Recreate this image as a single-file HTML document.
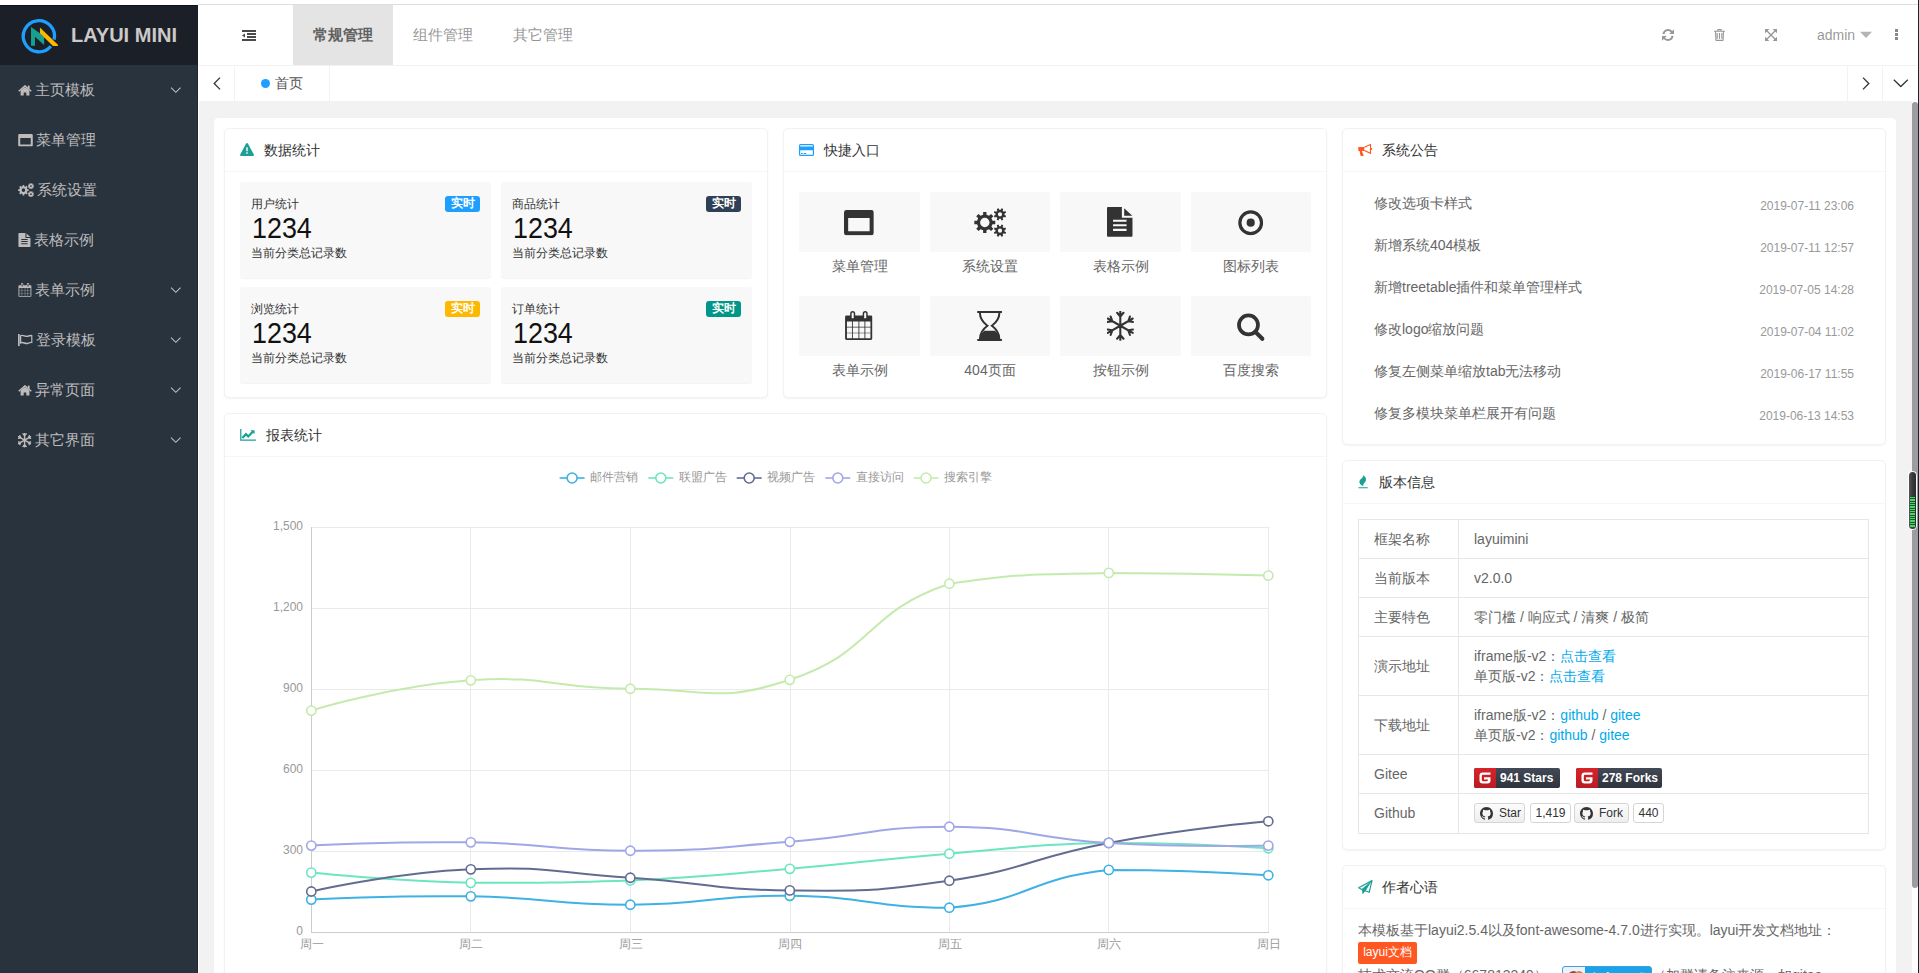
<!DOCTYPE html>
<html><head><meta charset="utf-8">
<style>
*{box-sizing:border-box;margin:0;padding:0}
html,body{width:1919px;height:973px;overflow:hidden;background:#fff;font-family:"Liberation Sans",sans-serif;position:relative}
.a{position:absolute}
svg.i{position:absolute;fill:currentColor;overflow:visible}
#topline{position:absolute;left:198px;top:4px;width:1720px;height:1px;background:#dcdee3}
#rline{position:absolute;left:1918px;top:0;width:1px;height:973px;background:#102a33}
#side{position:absolute;left:0;top:5px;width:198px;height:968px;background:#28333e;color:rgb(191,187,187)}
#logo{position:absolute;left:0;top:0;width:198px;height:60px;background:#1b2028;border-top:1px solid #0e141b}
#logo .t{position:absolute;left:71px;top:17px;font-size:20px;font-weight:bold;color:rgb(205,201,201);line-height:26px;white-space:nowrap}
.mi{position:absolute;left:0;width:198px;height:50px}
.mi .tx{position:absolute;left:35px;top:14px;font-size:15px;line-height:22px;white-space:nowrap}
#header{position:absolute;left:198px;top:5px;width:1720px;height:60px;background:#fff}
#hline{position:absolute;left:198px;top:65px;width:1719px;height:1px;background:#f2f2f2}
.htab{position:absolute;top:5px;height:60px;width:100px;font-size:15px;line-height:60px;text-align:center;color:rgba(107,107,107,.72);font-weight:500;white-space:nowrap}
.htab.on{background:#e4e4e4;color:#606060;font-weight:700}
#tabbar{position:absolute;left:198px;top:66px;width:1719px;height:35px;background:#fff}
.vb{position:absolute;top:66px;width:1px;height:35px;background:#f2f2f2}
#content{position:absolute;left:198px;top:101px;width:1714px;height:872px;background:#f2f2f2}
#panel{position:absolute;left:213px;top:117px;width:1684px;height:900px;background:#fff;border:1px solid #f2f2f2;border-radius:5px}
.card{position:absolute;background:#fff;border:1px solid #f2f2f2;border-radius:5px;box-shadow:0 1px 2px 0 rgba(0,0,0,.05)}
.hd{position:absolute;left:0;top:0;right:0;height:43px;border-bottom:1px solid #f6f6f6;font-size:14px;color:#333;white-space:nowrap}
.hd span{position:absolute;top:11px;line-height:20px}
.sp{position:absolute;background:#f8f8f8;border-radius:3px;box-shadow:0 1px 1px rgba(0,0,0,.05)}
.sp h5{position:absolute;left:11px;top:14px;font-size:12px;line-height:16px;font-weight:normal;color:#333;white-space:nowrap}
.sp h1{position:absolute;left:12px;top:29.5px;font-size:28px;line-height:32px;font-weight:normal;color:#111;transform:scale(0.96,1.05);transform-origin:0 0}
.sp small{position:absolute;left:11px;top:63px;font-size:12px;line-height:16px;color:#333;white-space:nowrap}
.lbl{position:absolute;left:205px;top:14px;width:35px;height:16px;border-radius:3px;color:#fff;font-size:12px;font-weight:bold;line-height:15px;text-align:center}
.qb{position:absolute;width:121px;height:60px;background:#f8f8f8;border-radius:2px;color:#333}
.qc{position:absolute;width:121px;font-size:14px;line-height:20px;color:#666;text-align:center;white-space:nowrap}
.nt{position:absolute;left:1374px;font-size:14px;line-height:20px;color:#666;white-space:nowrap}
.nd{position:absolute;left:1701px;width:153px;text-align:right;font-size:12px;line-height:16px;color:#999;white-space:nowrap}
.tb td{position:absolute}
.vt{position:absolute;font-size:14px;line-height:20px;color:#666;white-space:nowrap}
.lk{color:#01aaed}

</style></head><body>
<svg width="0" height="0" style="position:absolute"><symbol id="i-win" viewBox="0 0 30 25.5"><path fill-rule="evenodd" d="M2.5,0H27.5A2.5,2.5 0 0 1 30,2.5V23A2.5,2.5 0 0 1 27.5,25.5H2.5A2.5,2.5 0 0 1 0,23V2.5A2.5,2.5 0 0 1 2.5,0ZM4.2,8V21.4H25.8V8Z"/></symbol><symbol id="i-gears" viewBox="0 0 32 29"><path fill-rule="evenodd" d="M18.32,12.81 L21.07,12.84 L21.07,16.16 L18.32,16.19 L17.25,18.76 L19.18,20.73 L16.83,23.08 L14.86,21.15 L12.29,22.22 L12.26,24.97 L8.94,24.97 L8.91,22.22 L6.34,21.15 L4.37,23.08 L2.02,20.73 L3.95,18.76 L2.88,16.19 L0.13,16.16 L0.13,12.84 L2.88,12.81 L3.95,10.24 L2.02,8.27 L4.37,5.92 L6.34,7.85 L8.91,6.78 L8.94,4.03 L12.26,4.03 L12.29,6.78 L14.86,7.85 L16.83,5.92 L19.18,8.27 L17.25,10.24 Z M5.90,14.50 a4.70,4.70 0 1,0 9.40,0 a4.70,4.70 0 1,0 -9.40,0 Z"/><path fill-rule="evenodd" d="M30.33,7.11 L31.93,7.77 L31.17,9.59 L29.57,8.93 L28.43,10.07 L29.09,11.67 L27.27,12.43 L26.61,10.83 L24.99,10.83 L24.33,12.43 L22.51,11.67 L23.17,10.07 L22.03,8.93 L20.43,9.59 L19.67,7.77 L21.27,7.11 L21.27,5.49 L19.67,4.83 L20.43,3.01 L22.03,3.67 L23.17,2.53 L22.51,0.93 L24.33,0.17 L24.99,1.77 L26.61,1.77 L27.27,0.17 L29.09,0.93 L28.43,2.53 L29.57,3.67 L31.17,3.01 L31.93,4.83 L30.33,5.49 Z M23.70,6.30 a2.10,2.10 0 1,0 4.20,0 a2.10,2.10 0 1,0 -4.20,0 Z"/><path fill-rule="evenodd" d="M30.33,23.51 L31.93,24.17 L31.17,25.99 L29.57,25.33 L28.43,26.47 L29.09,28.07 L27.27,28.83 L26.61,27.23 L24.99,27.23 L24.33,28.83 L22.51,28.07 L23.17,26.47 L22.03,25.33 L20.43,25.99 L19.67,24.17 L21.27,23.51 L21.27,21.89 L19.67,21.23 L20.43,19.41 L22.03,20.07 L23.17,18.93 L22.51,17.33 L24.33,16.57 L24.99,18.17 L26.61,18.17 L27.27,16.57 L29.09,17.33 L28.43,18.93 L29.57,20.07 L31.17,19.41 L31.93,21.23 L30.33,21.89 Z M23.70,22.70 a2.10,2.10 0 1,0 4.20,0 a2.10,2.10 0 1,0 -4.20,0 Z"/></symbol><symbol id="i-file" viewBox="0 0 26 30"><path fill-rule="evenodd" d="M1,0H15V10.8H25.8V29A1,1 0 0 1 24.8,30H1A1,1 0 0 1 0,29V1A1,1 0 0 1 1,0ZM6.1,12.8H19.7V14.9H6.1ZM6.1,17.2H19.7V19.3H6.1ZM6.1,21.9H19.7V24H6.1Z"/><path d="M17.3,1.2L25.5,8.7H17.3Z"/></symbol><symbol id="i-dot" viewBox="0 0 26 26"><circle cx="13" cy="13" r="11.1" fill="none" stroke="currentColor" stroke-width="3.3"/><circle cx="13" cy="13" r="4.2"/></symbol><symbol id="i-cal" viewBox="0 0 28 30"><path fill-rule="nonzero" d="M1.5,4.7H26.2A1.5,1.5 0 0 1 27.7,6.2V28A1.5,1.5 0 0 1 26.2,29.5H1.5A1.5,1.5 0 0 1 0,28V6.2A1.5,1.5 0 0 1 1.5,4.7ZM1.9,10.8V15.9H7.0V10.8ZM1.9,16.7V22.0H7.0V16.7ZM1.9,22.7V27.7H7.0V22.7ZM7.9,10.8V15.9H13.6V10.8ZM7.9,16.7V22.0H13.6V16.7ZM7.9,22.7V27.7H13.6V22.7ZM14.5,10.8V15.9H19.7V10.8ZM14.5,16.7V22.0H19.7V16.7ZM14.5,22.7V27.7H19.7V22.7ZM20.6,10.8V15.9H25.8V10.8ZM20.6,16.7V22.0H25.8V16.7ZM20.6,22.7V27.7H25.8V22.7Z M5.2,8.6V2.6A2.55,2.55 0 0 1 10.3,2.6V8.6Z M6.7,4.7H8.8V2.6A1.05,1.05 0 0 0 6.7,2.6Z M6.7,7.4H8.8V4.7H6.7Z M6.7,7.4H8.8V4.7H6.7Z M17.9,8.6V2.6A2.55,2.55 0 0 1 23,2.6V8.6Z M19.4,4.7H21.5V2.6A1.05,1.05 0 0 0 19.4,2.6Z M19.4,7.4H21.5V4.7H19.4Z M19.4,7.4H21.5V4.7H19.4Z"/></symbol><symbol id="i-hour" viewBox="0 0 25.3 30"><rect x="0" y="0" width="25.3" height="2" rx="0.8"/><rect x="0" y="28" width="25.3" height="2" rx="0.8"/><path fill="none" stroke="currentColor" stroke-width="2" d="M2.9,2C2.9,8 6,11.5 10.4,14.8C6,18.1 2.9,21.5 2.9,28M22.4,2C22.4,8 19.3,11.5 14.9,14.8C19.3,18.1 22.4,21.5 22.4,28"/><path d="M7.3,19.9H18C20.7,22 22.5,24.5 22.5,28.1H2.8C2.8,24.5 4.6,22 7.3,19.9Z"/></symbol><symbol id="i-snow" viewBox="0 0 27 30"><path fill="none" stroke="currentColor" stroke-width="2.1" stroke-linecap="round" d="M13.40,14.90 L13.40,0.30 M13.40,5.60 L10.19,1.77 M13.40,5.60 L16.61,1.77 M13.40,14.90 L26.04,7.60 M21.45,10.25 L23.16,5.55 M21.45,10.25 L26.38,11.12 M13.40,14.90 L26.04,22.20 M21.45,19.55 L26.38,18.68 M21.45,19.55 L23.16,24.25 M13.40,14.90 L13.40,29.50 M13.40,24.20 L16.61,28.03 M13.40,24.20 L10.19,28.03 M13.40,14.90 L0.76,22.20 M5.35,19.55 L3.64,24.25 M5.35,19.55 L0.42,18.68 M13.40,14.90 L0.76,7.60 M5.35,10.25 L0.42,11.12 M5.35,10.25 L3.64,5.55 "/></symbol><symbol id="i-search" viewBox="0 0 28 28"><circle cx="11.6" cy="12" r="9.6" fill="none" stroke="currentColor" stroke-width="3.8"/><path d="M18.6,19L25.6,26" stroke="currentColor" stroke-width="4.2" stroke-linecap="round"/></symbol><symbol id="i-home" viewBox="0 0 14 11"><path fill="none" stroke="currentColor" stroke-width="1.5" d="M0.7,6.3L7,0.9L13.3,6.3"/><path d="M2.6,5.6L7,1.9L11.4,5.6V10.6H8.3V7.4H5.7V10.6H2.6Z"/><rect x="9.8" y="0.6" width="1.8" height="3.2"/></symbol><symbol id="i-flag" viewBox="0 0 15 12.5"><rect x="0" y="0" width="1.7" height="12.5"/><path fill="none" stroke="currentColor" stroke-width="1.4" d="M2.6,1.8C5,0.3 7.5,3.3 10,2.3C12,1.5 13.2,1.4 14.2,1.6V8.6C13,8.5 12,8.8 10,9.6C7.5,10.6 5,7.6 2.6,9.1Z"/></symbol><symbol id="i-down" viewBox="0 0 12 7"><path fill="none" stroke="currentColor" stroke-width="1.3" d="M0.6,0.7L6,6L11.4,0.7"/></symbol><symbol id="i-warn" viewBox="0 0 14 13"><path fill-rule="evenodd" d="M6.1,0.6Q7,-0.6 7.9,0.6L13.8,11.6Q14.2,12.9 12.9,12.9H1.1Q-0.2,12.9 0.2,11.6ZM6.3,4.3H7.7V8.3H6.3ZM6.3,9.3H7.7V10.8H6.3Z"/></symbol><symbol id="i-card" viewBox="0 0 15 12"><path fill-rule="evenodd" d="M1.5,0H13.5A1.5,1.5 0 0 1 15,1.5V10.5A1.5,1.5 0 0 1 13.5,12H1.5A1.5,1.5 0 0 1 0,10.5V1.5A1.5,1.5 0 0 1 1.5,0ZM1.2,1.3V2.5H13.8V1.3ZM1.2,6.3V10.7H13.8V6.3Z"/><path d="M2,9.1H3.8V10H2ZM4.7,9.1H7.3V10H4.7Z"/></symbol><symbol id="i-horn" viewBox="0 0 15 12"><path d="M0.3,3.4Q0.3,2.9 0.8,2.9H6.3V6.9H3.8L5.6,11.2Q5.8,11.9 5,11.9H3.3Q2.6,11.9 2.4,11.2L1.6,6.9H0.8Q0.3,6.9 0.3,6.4Z"/><path fill="none" stroke="currentColor" stroke-width="1.1" d="M6.3,3.3L12.5,0.5V9.3L6.3,6.5"/><circle cx="13.3" cy="4.9" r="1"/></symbol><symbol id="i-fire" viewBox="0 0 12 15"><path d="M5.6,0.1C7.6,1.4 9.1,3 8.7,5.5C8.4,7.5 6.3,8.5 5.8,10C5.6,10.6 5.7,11.2 6,11.8C3.5,11 1.4,9.5 1.5,7.1C1.6,4.9 3.8,3.8 4.9,2.5C5.4,1.8 5.7,1 5.6,0.1Z"/><rect x="0.3" y="13.1" width="10.6" height="1" rx="0.5"/></symbol><symbol id="i-lchart" viewBox="0 0 17 13"><path d="M0,0H1.3V10.9H16.5V12.2H0Z"/><path fill="none" stroke="currentColor" stroke-width="2.3" d="M2.3,9.4L6.1,5.4L8.5,7.8L13.4,2.6"/><path d="M10.9,1.2H15.1V5.4Z"/></symbol><symbol id="i-plane" viewBox="0 0 15 15"><path fill="none" stroke="currentColor" stroke-width="1.2" stroke-linejoin="round" d="M14,0.6L0.7,7.8L4.2,9.7L11.2,12.3Z"/><path d="M14,0.6L3.8,8.9L4.6,14.2L7.7,10.8Z"/></symbol><symbol id="i-prev" viewBox="0 0 8 13"><path fill="none" stroke="currentColor" stroke-width="1.3" d="M7,0.6L1.2,6.5L7,12.4"/></symbol><symbol id="i-next" viewBox="0 0 8 13"><path fill="none" stroke="currentColor" stroke-width="1.3" d="M1,0.6L6.8,6.5L1,12.4"/></symbol><symbol id="i-vdown" viewBox="0 0 16 9"><path fill="none" stroke="currentColor" stroke-width="1.3" d="M0.6,0.8L8,8L15.4,0.8"/></symbol><symbol id="i-outdent" viewBox="0 0 14 11"><rect x="0" y="0" width="14" height="2"/><rect x="5" y="3" width="9" height="2"/><rect x="5" y="6" width="9" height="2"/><rect x="0" y="9" width="14" height="2"/><path d="M0,5.5L3,3.5V7.5Z"/></symbol><symbol id="i-refresh" viewBox="0 0 12 12"><path fill="none" stroke="currentColor" stroke-width="1.9" d="M1.5,5.2A4.6,4.6 0 0 1 10.1,3.4"/><path d="M12,0.3V5.1H7.2Z"/><path fill="none" stroke="currentColor" stroke-width="1.9" d="M10.5,6.8A4.6,4.6 0 0 1 1.9,8.6"/><path d="M0,11.7V6.9H4.8Z"/></symbol><symbol id="i-trash" viewBox="0 0 11 12"><path fill="none" stroke="currentColor" stroke-width="1.1" d="M0,2.3H11M3.7,2.3V1.2Q3.7,0.6 4.3,0.6H6.7Q7.3,0.6 7.3,1.2V2.3M1.5,2.3L1.9,11Q1.9,11.4 2.4,11.4H8.6Q9.1,11.4 9.1,11L9.5,2.3M3.2,4.1V9.7M5.5,4.1V9.7M7.8,4.1V9.7"/></symbol><symbol id="i-expand" viewBox="0 0 12 12"><path d="M0,0H4.3L0,4.3ZM12,0V4.3L7.7,0ZM0,12V7.7L4.3,12ZM12,12H7.7L12,7.7Z"/><path fill="none" stroke="currentColor" stroke-width="1.35" d="M1.5,1.5L10.5,10.5M10.5,1.5L1.5,10.5"/></symbol><symbol id="i-octo" viewBox="0 0 16 16"><path d="M8,0C3.58,0 0,3.58 0,8c0,3.54 2.29,6.53 5.47,7.59.4.07.55-.17.55-.38 0-.19-.01-.82-.01-1.49-2.01.37-2.53-.49-2.69-.94-.09-.23-.48-.94-.82-1.13-.28-.15-.68-.52-.01-.53.63-.01 1.08.58 1.23.82.72 1.21 1.87.87 2.33.66.07-.52.28-.87.51-1.07-1.78-.2-3.64-.89-3.64-3.95 0-.87.31-1.59.82-2.15-.08-.2-.36-1.02.08-2.12 0 0 .67-.21 2.2.82.64-.18 1.32-.27 2-.27.68 0 1.36.09 2 .27 1.53-1.04 2.2-.82 2.2-.82.44 1.1.16 1.92.08 2.12.51.56.82 1.27.82 2.15 0 3.07-1.87 3.75-3.65 3.95.29.25.54.73.54 1.48 0 1.07-.01 1.93-.01 2.2 0 .21.15.46.55.38A8.013,8.013 0 0 0 16,8c0-4.42-3.58-8-8-8z"/></symbol><symbol id="i-gears-s" viewBox="0 0 32 29"><path fill-rule="evenodd" d="M18.71,12.72 L21.27,12.81 L21.27,16.19 L18.71,16.28 L17.59,18.97 L19.34,20.85 L16.95,23.24 L15.07,21.49 L12.38,22.61 L12.29,25.17 L8.91,25.17 L8.82,22.61 L6.13,21.49 L4.25,23.24 L1.86,20.85 L3.61,18.97 L2.49,16.28 L-0.07,16.19 L-0.07,12.81 L2.49,12.72 L3.61,10.03 L1.86,8.15 L4.25,5.76 L6.13,7.51 L8.82,6.39 L8.91,3.83 L12.29,3.83 L12.38,6.39 L15.07,7.51 L16.95,5.76 L19.34,8.15 L17.59,10.03 Z M7.00,14.50 a3.60,3.60 0 1,0 7.20,0 a3.60,3.60 0 1,0 -7.20,0 Z"/><path fill-rule="evenodd" d="M30.72,7.18 L32.02,7.79 L31.26,9.64 L29.90,9.16 L28.66,10.40 L29.14,11.76 L27.29,12.52 L26.68,11.22 L24.92,11.22 L24.31,12.52 L22.46,11.76 L22.94,10.40 L21.70,9.16 L20.34,9.64 L19.58,7.79 L20.88,7.18 L20.88,5.42 L19.58,4.81 L20.34,2.96 L21.70,3.44 L22.94,2.20 L22.46,0.84 L24.31,0.08 L24.92,1.38 L26.68,1.38 L27.29,0.08 L29.14,0.84 L28.66,2.20 L29.90,3.44 L31.26,2.96 L32.02,4.81 L30.72,5.42 Z M24.10,6.30 a1.70,1.70 0 1,0 3.40,0 a1.70,1.70 0 1,0 -3.40,0 Z"/><path fill-rule="evenodd" d="M30.72,23.58 L32.02,24.19 L31.26,26.04 L29.90,25.56 L28.66,26.80 L29.14,28.16 L27.29,28.92 L26.68,27.62 L24.92,27.62 L24.31,28.92 L22.46,28.16 L22.94,26.80 L21.70,25.56 L20.34,26.04 L19.58,24.19 L20.88,23.58 L20.88,21.82 L19.58,21.21 L20.34,19.36 L21.70,19.84 L22.94,18.60 L22.46,17.24 L24.31,16.48 L24.92,17.78 L26.68,17.78 L27.29,16.48 L29.14,17.24 L28.66,18.60 L29.90,19.84 L31.26,19.36 L32.02,21.21 L30.72,21.82 Z M24.10,22.70 a1.70,1.70 0 1,0 3.40,0 a1.70,1.70 0 1,0 -3.40,0 Z"/></symbol><symbol id="i-snow-s" viewBox="0 0 27 30"><path fill="none" stroke="currentColor" stroke-width="2.9" stroke-linecap="round" d="M13.40,14.90 L13.40,0.30 M13.40,5.60 L10.19,1.77 M13.40,5.60 L16.61,1.77 M13.40,14.90 L26.04,7.60 M21.45,10.25 L23.16,5.55 M21.45,10.25 L26.38,11.12 M13.40,14.90 L26.04,22.20 M21.45,19.55 L26.38,18.68 M21.45,19.55 L23.16,24.25 M13.40,14.90 L13.40,29.50 M13.40,24.20 L16.61,28.03 M13.40,24.20 L10.19,28.03 M13.40,14.90 L0.76,22.20 M5.35,19.55 L3.64,24.25 M5.35,19.55 L0.42,18.68 M13.40,14.90 L0.76,7.60 M5.35,10.25 L0.42,11.12 M5.35,10.25 L3.64,5.55 "/></symbol></svg>
<div id="topline"></div>
<div id="side"><div id="logo"></div></div>
<svg class="a" style="left:0;top:0;width:198px;height:65px"><path d="M50.85,46.23 A15.6,15.6 0 1 1 54.09,39.71" fill="none" stroke="#1e9fff" stroke-width="3.3"/><polygon fill="#16a08f" points="31.03,27.05 39.91,33.21 44.11,37.26 44.11,45.05 34.98,36.67 34.98,45.79 31.03,45.79"/><polygon fill="#ffb800" points="39.91,27.54 58.17,44.96 57.67,45.94 52.99,45.94 39.91,33.31"/></svg>
<div class="a" style="left:71px;top:22px;font-size:20px;line-height:26px;font-weight:bold;color:rgb(205,201,201);white-space:nowrap">LAYUI MINI</div>
<svg class="i" style="left:17.50px;top:84.50px;width:14.00px;height:11.00px;color:rgb(191,187,187);" preserveAspectRatio="none"><use href="#i-home"/></svg>
<div class="a " style="left:35.00px;top:79.00px;font-size:15px;line-height:22px;color:rgb(191,187,187);white-space:nowrap">主页模板</div>
<svg class="i" style="left:169.90px;top:87.00px;width:11.60px;height:6.20px;color:rgb(191,187,187);" preserveAspectRatio="none"><use href="#i-down"/></svg>
<svg class="i" style="left:17.60px;top:133.90px;width:15.00px;height:12.40px;color:rgb(191,187,187);" preserveAspectRatio="none"><use href="#i-win"/></svg>
<div class="a " style="left:36.00px;top:129.00px;font-size:15px;line-height:22px;color:rgb(191,187,187);white-space:nowrap">菜单管理</div>
<svg class="i" style="left:17.60px;top:182.80px;width:16.20px;height:14.30px;color:rgb(191,187,187);" preserveAspectRatio="none"><use href="#i-gears-s"/></svg>
<div class="a " style="left:37.00px;top:179.00px;font-size:15px;line-height:22px;color:rgb(191,187,187);white-space:nowrap">系统设置</div>
<svg class="i" style="left:17.60px;top:232.90px;width:13.00px;height:14.00px;color:rgb(191,187,187);" preserveAspectRatio="none"><use href="#i-file"/></svg>
<div class="a " style="left:34.00px;top:229.00px;font-size:15px;line-height:22px;color:rgb(191,187,187);white-space:nowrap">表格示例</div>
<svg class="i" style="left:17.60px;top:282.90px;width:14.00px;height:14.00px;color:rgb(191,187,187);" preserveAspectRatio="none"><use href="#i-cal"/></svg>
<div class="a " style="left:35.00px;top:279.00px;font-size:15px;line-height:22px;color:rgb(191,187,187);white-space:nowrap">表单示例</div>
<svg class="i" style="left:169.90px;top:287.00px;width:11.60px;height:6.20px;color:rgb(191,187,187);" preserveAspectRatio="none"><use href="#i-down"/></svg>
<svg class="i" style="left:18.30px;top:333.60px;width:14.70px;height:12.20px;color:rgb(191,187,187);" preserveAspectRatio="none"><use href="#i-flag"/></svg>
<div class="a " style="left:36.00px;top:329.00px;font-size:15px;line-height:22px;color:rgb(191,187,187);white-space:nowrap">登录模板</div>
<svg class="i" style="left:169.90px;top:337.00px;width:11.60px;height:6.20px;color:rgb(191,187,187);" preserveAspectRatio="none"><use href="#i-down"/></svg>
<svg class="i" style="left:17.50px;top:384.50px;width:14.00px;height:11.00px;color:rgb(191,187,187);" preserveAspectRatio="none"><use href="#i-home"/></svg>
<div class="a " style="left:35.00px;top:379.00px;font-size:15px;line-height:22px;color:rgb(191,187,187);white-space:nowrap">异常页面</div>
<svg class="i" style="left:169.90px;top:387.00px;width:11.60px;height:6.20px;color:rgb(191,187,187);" preserveAspectRatio="none"><use href="#i-down"/></svg>
<svg class="i" style="left:18.00px;top:432.90px;width:13.30px;height:14.40px;color:rgb(191,187,187);" preserveAspectRatio="none"><use href="#i-snow-s"/></svg>
<div class="a " style="left:35.00px;top:429.00px;font-size:15px;line-height:22px;color:rgb(191,187,187);white-space:nowrap">其它界面</div>
<svg class="i" style="left:169.90px;top:437.00px;width:11.60px;height:6.20px;color:rgb(191,187,187);" preserveAspectRatio="none"><use href="#i-down"/></svg>
<div id="hline"></div>
<svg class="i" style="left:242.00px;top:30.00px;width:14.00px;height:11.00px;color:#4a4a4a;" preserveAspectRatio="none"><use href="#i-outdent"/></svg>
<div class="htab on" style="left:293px">常规管理</div>
<div class="htab" style="left:393px">组件管理</div>
<div class="htab" style="left:493px">其它管理</div>
<svg class="i" style="left:1662.00px;top:29.00px;width:12.00px;height:12.00px;color:#979797;" preserveAspectRatio="none"><use href="#i-refresh"/></svg>
<svg class="i" style="left:1714.00px;top:29.00px;width:11.00px;height:12.00px;color:#979797;" preserveAspectRatio="none"><use href="#i-trash"/></svg>
<svg class="i" style="left:1765.00px;top:29.00px;width:12.00px;height:12.00px;color:#979797;" preserveAspectRatio="none"><use href="#i-expand"/></svg>
<div class="a " style="left:1817.00px;top:25.00px;font-size:14px;line-height:20px;color:rgba(107,107,107,.7)">admin</div>
<svg class="a" style="left:1859px;top:31px;width:14px;height:8px"><path d="M1,0.8H13L7,7Z" fill="#b5b5b5"/></svg>
<div class="a" style="left:1895px;top:29px;width:3px;height:3px;background:#8f8486"></div>
<div class="a" style="left:1895px;top:33px;width:3px;height:3px;background:#8f8486"></div>
<div class="a" style="left:1895px;top:37px;width:3px;height:3px;background:#8f8486"></div>
<div class="vb" style="left:234px"></div>
<div class="vb" style="left:329px"></div>
<div class="vb" style="left:1847px"></div>
<div class="vb" style="left:1882px"></div>
<svg class="i" style="left:212.50px;top:76.50px;width:8.00px;height:13.00px;color:#333;" preserveAspectRatio="none"><use href="#i-prev"/></svg>
<div class="a" style="left:261px;top:79px;width:9px;height:9px;border-radius:50%;background:#1e9fff"></div>
<div class="a " style="left:275.00px;top:73.00px;font-size:14px;line-height:20px;color:#555;white-space:nowrap">首页</div>
<svg class="i" style="left:1861.50px;top:76.50px;width:8.00px;height:13.00px;color:#333;" preserveAspectRatio="none"><use href="#i-next"/></svg>
<svg class="i" style="left:1892.60px;top:78.50px;width:15.60px;height:8.50px;color:#333;" preserveAspectRatio="none"><use href="#i-vdown"/></svg>
<div id="content"></div>
<div class="a" style="left:197px;top:65px;width:1px;height:908px;background:#1e2733"></div>
<div class="a" style="left:198px;top:101px;width:1px;height:872px;background:#fff"></div>
<div id="panel"></div>
<div class="a" style="left:1912px;top:102px;width:6px;height:786px;border-radius:3px;background:#9c9da1"></div>
<div class="a" style="left:1907.5px;top:471px;width:9px;height:59px;border-radius:4.5px;background:#fff;opacity:.9"></div>
<div class="a" style="left:1908.5px;top:472px;width:7px;height:57px;border-radius:3.5px;background:linear-gradient(90deg,#555557,#3a3a3c 50%,#2c2c2e);overflow:hidden"><div class="a" style="left:1px;top:25px;width:5px;height:31px;background:repeating-linear-gradient(180deg,#3ddc62 0,#3ddc62 1.3px,#2f4a35 1.3px,#2f4a35 2.35px)"></div></div>
<div id="rline"></div>
<div class="card" style="left:224px;top:128px;width:544px;height:270px"><div class="hd"></div></div>
<div class="card" style="left:783px;top:128px;width:544px;height:270px"><div class="hd"></div></div>
<div class="card" style="left:224px;top:413px;width:1103px;height:600px"><div class="hd"></div></div>
<div class="card" style="left:1342px;top:128px;width:544px;height:317px"><div class="hd"></div></div>
<div class="card" style="left:1342px;top:460px;width:544px;height:390px"><div class="hd"></div></div>
<div class="card" style="left:1342px;top:865px;width:544px;height:200px"><div class="hd"></div></div>
<svg class="i" style="left:240.00px;top:143.00px;width:14.00px;height:13.00px;color:#1aa094;" preserveAspectRatio="none"><use href="#i-warn"/></svg>
<div class="a " style="left:264.00px;top:140.00px;font-size:14px;line-height:20px;color:#333;white-space:nowrap">数据统计</div>
<svg class="i" style="left:799.00px;top:144.00px;width:15.00px;height:12.00px;color:#1e9fff;" preserveAspectRatio="none"><use href="#i-card"/></svg>
<div class="a " style="left:824.00px;top:140.00px;font-size:14px;line-height:20px;color:#333;white-space:nowrap">快捷入口</div>
<svg class="i" style="left:239.70px;top:428.70px;width:16.50px;height:12.40px;color:#1aa094;" preserveAspectRatio="none"><use href="#i-lchart"/></svg>
<div class="a " style="left:266.00px;top:425.00px;font-size:14px;line-height:20px;color:#333;white-space:nowrap">报表统计</div>
<svg class="i" style="left:1357.80px;top:143.90px;width:15.00px;height:12.00px;color:#ff5722;" preserveAspectRatio="none"><use href="#i-horn"/></svg>
<div class="a " style="left:1382.00px;top:140.00px;font-size:14px;line-height:20px;color:#333;white-space:nowrap">系统公告</div>
<svg class="i" style="left:1358.00px;top:475.00px;width:11.00px;height:14.30px;color:#1aa094;" preserveAspectRatio="none"><use href="#i-fire"/></svg>
<div class="a " style="left:1379.00px;top:472.00px;font-size:14px;line-height:20px;color:#333;white-space:nowrap">版本信息</div>
<svg class="i" style="left:1357.90px;top:879.80px;width:15.00px;height:15.00px;color:#1aa094;" preserveAspectRatio="none"><use href="#i-plane"/></svg>
<div class="a " style="left:1382.00px;top:877.00px;font-size:14px;line-height:20px;color:#333;white-space:nowrap">作者心语</div>
<div class="sp" style="left:240px;top:182px;width:251px;height:96px"><h5>用户统计</h5><h1>1234</h1><small>当前分类总记录数</small><div class="lbl" style="background:#1e9fff">实时</div></div>
<div class="sp" style="left:501px;top:182px;width:251px;height:96px"><h5>商品统计</h5><h1>1234</h1><small>当前分类总记录数</small><div class="lbl" style="background:#2f4056">实时</div></div>
<div class="sp" style="left:240px;top:287px;width:251px;height:96px"><h5>浏览统计</h5><h1>1234</h1><small>当前分类总记录数</small><div class="lbl" style="background:#ffb800">实时</div></div>
<div class="sp" style="left:501px;top:287px;width:251px;height:96px"><h5>订单统计</h5><h1>1234</h1><small>当前分类总记录数</small><div class="lbl" style="background:#009688">实时</div></div>
<div class="qb" style="left:799.0px;top:192px;width:120.5px"></div>
<svg class="i" style="left:844.40px;top:209.50px;width:29.80px;height:25.40px;color:#333;" preserveAspectRatio="none"><use href="#i-win"/></svg>
<div class="qc" style="left:799.0px;top:256px">菜单管理</div>
<div class="qb" style="left:929.5px;top:192px;width:120.5px"></div>
<svg class="i" style="left:973.80px;top:207.70px;width:32.40px;height:29.00px;color:#333;" preserveAspectRatio="none"><use href="#i-gears"/></svg>
<div class="qc" style="left:929.5px;top:256px">系统设置</div>
<div class="qb" style="left:1060.0px;top:192px;width:120.5px"></div>
<svg class="i" style="left:1107.20px;top:207.00px;width:25.80px;height:29.90px;color:#333;" preserveAspectRatio="none"><use href="#i-file"/></svg>
<div class="qc" style="left:1060.0px;top:256px">表格示例</div>
<div class="qb" style="left:1190.5px;top:192px;width:120.5px"></div>
<svg class="i" style="left:1238.00px;top:209.50px;width:25.40px;height:25.40px;color:#333;" preserveAspectRatio="none"><use href="#i-dot"/></svg>
<div class="qc" style="left:1190.5px;top:256px">图标列表</div>
<div class="qb" style="left:799.0px;top:296px;width:120.5px"></div>
<svg class="i" style="left:845.30px;top:311.30px;width:27.70px;height:29.50px;color:#333;" preserveAspectRatio="none"><use href="#i-cal"/></svg>
<div class="qc" style="left:799.0px;top:360px">表单示例</div>
<div class="qb" style="left:929.5px;top:296px;width:120.5px"></div>
<svg class="i" style="left:977.10px;top:311.10px;width:25.30px;height:29.90px;color:#333;" preserveAspectRatio="none"><use href="#i-hour"/></svg>
<div class="qc" style="left:929.5px;top:360px">404页面</div>
<div class="qb" style="left:1060.0px;top:296px;width:120.5px"></div>
<svg class="i" style="left:1106.70px;top:311.30px;width:26.80px;height:29.70px;color:#333;" preserveAspectRatio="none"><use href="#i-snow"/></svg>
<div class="qc" style="left:1060.0px;top:360px">按钮示例</div>
<div class="qb" style="left:1190.5px;top:296px;width:120.5px"></div>
<svg class="i" style="left:1237.10px;top:313.10px;width:27.70px;height:27.90px;color:#333;" preserveAspectRatio="none"><use href="#i-search"/></svg>
<div class="qc" style="left:1190.5px;top:360px">百度搜索</div>
<div class="nt" style="top:193px">修改选项卡样式</div>
<div class="nd" style="top:197.6px">2019-07-11 23:06</div>
<div class="nt" style="top:235px">新增系统404模板</div>
<div class="nd" style="top:239.6px">2019-07-11 12:57</div>
<div class="nt" style="top:277px">新增treetable插件和菜单管理样式</div>
<div class="nd" style="top:281.6px">2019-07-05 14:28</div>
<div class="nt" style="top:319px">修改logo缩放问题</div>
<div class="nd" style="top:323.6px">2019-07-04 11:02</div>
<div class="nt" style="top:361px">修复左侧菜单缩放tab无法移动</div>
<div class="nd" style="top:365.6px">2019-06-17 11:55</div>
<div class="nt" style="top:403px">修复多模块菜单栏展开有问题</div>
<div class="nd" style="top:407.6px">2019-06-13 14:53</div>
<div class="a" style="left:1358px;top:519px;width:511px;height:315px;border:1px solid #e6e6e6"></div>
<div class="a" style="left:1358px;top:558px;width:511px;height:1px;background:#e6e6e6"></div>
<div class="a" style="left:1358px;top:597px;width:511px;height:1px;background:#e6e6e6"></div>
<div class="a" style="left:1358px;top:636px;width:511px;height:1px;background:#e6e6e6"></div>
<div class="a" style="left:1358px;top:695px;width:511px;height:1px;background:#e6e6e6"></div>
<div class="a" style="left:1358px;top:754px;width:511px;height:1px;background:#e6e6e6"></div>
<div class="a" style="left:1358px;top:793px;width:511px;height:1px;background:#e6e6e6"></div>
<div class="a" style="left:1458px;top:519px;width:1px;height:315px;background:#e6e6e6"></div>
<div class="a " style="left:1374.00px;top:528.50px;font-size:14px;line-height:20px;color:#666;white-space:nowrap">框架名称</div>
<div class="a " style="left:1374.00px;top:567.50px;font-size:14px;line-height:20px;color:#666;white-space:nowrap">当前版本</div>
<div class="a " style="left:1374.00px;top:606.50px;font-size:14px;line-height:20px;color:#666;white-space:nowrap">主要特色</div>
<div class="a " style="left:1374.00px;top:655.50px;font-size:14px;line-height:20px;color:#666;white-space:nowrap">演示地址</div>
<div class="a " style="left:1374.00px;top:714.50px;font-size:14px;line-height:20px;color:#666;white-space:nowrap">下载地址</div>
<div class="a " style="left:1374.00px;top:763.50px;font-size:14px;line-height:20px;color:#666;white-space:nowrap">Gitee</div>
<div class="a " style="left:1374.00px;top:803.00px;font-size:14px;line-height:20px;color:#666;white-space:nowrap">Github</div>
<div class="a " style="left:1474.00px;top:528.50px;font-size:14px;line-height:20px;color:#666;white-space:nowrap">layuimini</div>
<div class="a " style="left:1474.00px;top:567.50px;font-size:14px;line-height:20px;color:#666;white-space:nowrap">v2.0.0</div>
<div class="a " style="left:1474.00px;top:606.50px;font-size:14px;line-height:20px;color:#666;white-space:nowrap">零门槛 / 响应式 / 清爽 / 极简</div>
<div class="a " style="left:1474.00px;top:645.50px;font-size:14px;line-height:20px;color:#666;white-space:nowrap">iframe版-v2：<span class="lk">点击查看</span></div>
<div class="a " style="left:1474.00px;top:665.50px;font-size:14px;line-height:20px;color:#666;white-space:nowrap">单页版-v2：<span class="lk">点击查看</span></div>
<div class="a " style="left:1474.00px;top:704.50px;font-size:14px;line-height:20px;color:#666;white-space:nowrap">iframe版-v2：<span class="lk">github</span> / <span class="lk">gitee</span></div>
<div class="a " style="left:1474.00px;top:724.50px;font-size:14px;line-height:20px;color:#666;white-space:nowrap">单页版-v2：<span class="lk">github</span> / <span class="lk">gitee</span></div>
<div class="a" style="left:1474px;top:768px;width:86px;height:20px;border-radius:2px;background:linear-gradient(#434956,#2f333d);overflow:hidden"><div class="a" style="left:0;top:0;width:22px;height:20px;background:linear-gradient(#d6242b,#b81c22)"></div><svg class="a" style="left:5px;top:4px;width:12px;height:12px" viewBox="0 0 12 12"><path d="M11.5,0.5H3.5A3,3 0 0 0 0.5,3.5V8.5A3,3 0 0 0 3.5,11.5H8.5A3,3 0 0 0 11.5,8.5V5.3H5V7.6H9Q9,9.2 7.6,9.2H4.2Q2.8,9.2 2.8,7.8V4.2Q2.8,2.8 4.2,2.8H11.5Z" fill="#fff"/></svg><div class="a" style="left:26px;top:3px;font-size:12px;line-height:14px;color:#fff;font-weight:bold;white-space:nowrap">941 Stars</div></div>
<div class="a" style="left:1576px;top:768px;width:86px;height:20px;border-radius:2px;background:linear-gradient(#434956,#2f333d);overflow:hidden"><div class="a" style="left:0;top:0;width:22px;height:20px;background:linear-gradient(#d6242b,#b81c22)"></div><svg class="a" style="left:5px;top:4px;width:12px;height:12px" viewBox="0 0 12 12"><path d="M11.5,0.5H3.5A3,3 0 0 0 0.5,3.5V8.5A3,3 0 0 0 3.5,11.5H8.5A3,3 0 0 0 11.5,8.5V5.3H5V7.6H9Q9,9.2 7.6,9.2H4.2Q2.8,9.2 2.8,7.8V4.2Q2.8,2.8 4.2,2.8H11.5Z" fill="#fff"/></svg><div class="a" style="left:26px;top:3px;font-size:12px;line-height:14px;color:#fff;font-weight:bold;white-space:nowrap">278 Forks</div></div>
<div class="a" style="left:1474px;top:803px;width:51px;height:20px;border:1px solid #d5d5d5;border-radius:3px;background:linear-gradient(#fcfcfc,#eee)"><svg class="a" style="left:4.5px;top:2.5px;width:13px;height:13px;color:#333;fill:#333" viewBox="0 0 16 16"><use href="#i-octo"/></svg><div class="a" style="left:24px;top:2px;font-size:12px;line-height:14px;color:#333;white-space:nowrap">Star</div></div>
<div class="a" style="left:1530px;top:803px;width:41px;height:20px;border:1px solid #d5d5d5;border-radius:3px;background:#fff"><div class="a" style="left:0;top:2px;width:100%;text-align:center;font-size:12px;line-height:14px;color:#333;white-space:nowrap">1,419</div></div>
<div class="a" style="left:1574px;top:803px;width:55px;height:20px;border:1px solid #d5d5d5;border-radius:3px;background:linear-gradient(#fcfcfc,#eee)"><svg class="a" style="left:4.5px;top:2.5px;width:13px;height:13px;color:#333;fill:#333" viewBox="0 0 16 16"><use href="#i-octo"/></svg><div class="a" style="left:24px;top:2px;font-size:12px;line-height:14px;color:#333;white-space:nowrap">Fork</div></div>
<div class="a" style="left:1633px;top:803px;width:31px;height:20px;border:1px solid #d5d5d5;border-radius:3px;background:#fff"><div class="a" style="left:0;top:2px;width:100%;text-align:center;font-size:12px;line-height:14px;color:#333;white-space:nowrap">440</div></div>
<div class="a " style="left:1358.00px;top:920.00px;font-size:14px;line-height:20px;color:#666;white-space:nowrap">本模板基于layui2.5.4以及font-awesome-4.7.0进行实现。layui开发文档地址：</div>
<div class="a" style="left:1358px;top:942px;width:59px;height:22px;background:#ff5722;border-radius:2px;color:#fff;font-size:12px;font-weight:500;line-height:21px;text-align:center;white-space:nowrap">layui文档</div>
<div class="a " style="left:1358.00px;top:965.00px;font-size:14px;line-height:20px;color:#666;white-space:nowrap">技术交流QQ群（667813249）：</div>
<div class="a" style="left:1562px;top:966px;width:90px;height:22px;border:1px solid #3aa2dc;border-radius:3px;background:#19a3ea;overflow:hidden"><div class="a" style="left:0;top:0;width:22px;height:20px;background:#eef2f8"></div><div class="a" style="left:5px;top:4px;width:11px;height:11px;border-radius:50%;background:#9a4a34"></div><div class="a" style="left:11px;top:4px;width:10px;height:11px;border-radius:50%;background:#c98a4e"></div><div class="a" style="left:28px;top:3px;font-size:12px;line-height:16px;color:#fff;white-space:nowrap">加入QQ群</div></div>
<div class="a " style="left:1652.00px;top:965.00px;font-size:14px;line-height:20px;color:#666;white-space:nowrap">（加群请备注来源：如gitee</div>
<svg class="a" style="left:0;top:0;width:1919px;height:973px;overflow:visible">
<line x1="311" x2="1269" y1="851.5" y2="851.5" stroke="#eaeaea" stroke-width="1"/>
<line x1="311" x2="1269" y1="770.5" y2="770.5" stroke="#eaeaea" stroke-width="1"/>
<line x1="311" x2="1269" y1="689.5" y2="689.5" stroke="#eaeaea" stroke-width="1"/>
<line x1="311" x2="1269" y1="608.5" y2="608.5" stroke="#eaeaea" stroke-width="1"/>
<line x1="311" x2="1269" y1="527.5" y2="527.5" stroke="#eaeaea" stroke-width="1"/>
<line x1="470.5" x2="470.5" y1="527" y2="932" stroke="#eaeaea" stroke-width="1"/>
<line x1="630.5" x2="630.5" y1="527" y2="932" stroke="#eaeaea" stroke-width="1"/>
<line x1="790.5" x2="790.5" y1="527" y2="932" stroke="#eaeaea" stroke-width="1"/>
<line x1="949.5" x2="949.5" y1="527" y2="932" stroke="#eaeaea" stroke-width="1"/>
<line x1="1108.5" x2="1108.5" y1="527" y2="932" stroke="#eaeaea" stroke-width="1"/>
<line x1="1268.5" x2="1268.5" y1="527" y2="932" stroke="#eaeaea" stroke-width="1"/>
<line x1="311.5" x2="311.5" y1="527" y2="933" stroke="#ccc"/>
<line x1="311" x2="1269" y1="932.5" y2="932.5" stroke="#ccc"/>
<g fill="none" stroke-width="2"><path d="M311.30,899.60 C311.30,899.60 391.10,895.08 470.80,896.36 C550.60,897.64 550.56,904.86 630.30,904.73 C710.06,904.59 710.10,895.08 789.80,895.82 C869.60,896.56 870.53,907.70 949.30,907.70 C1030.03,901.14 1027.98,878.11 1108.80,869.90 C1187.48,869.90 1268.30,875.30 1268.30,875.30" stroke="#3fb1e3" />
<path d="M311.30,872.60 C311.30,872.60 390.97,880.90 470.80,882.86 C550.47,882.86 550.65,882.86 630.30,880.43 C710.15,876.92 710.12,875.50 789.80,868.82 C869.62,862.13 869.46,860.19 949.30,853.70 C1028.96,847.23 1028.98,844.25 1108.80,842.90 C1188.48,842.90 1268.30,848.30 1268.30,848.30" stroke="#6be6c1" />
<path d="M311.30,891.50 C311.30,891.50 390.72,872.82 470.80,869.36 C550.22,865.93 550.62,872.47 630.30,877.73 C710.12,883.00 710.00,889.68 789.80,890.42 C869.50,891.16 870.57,891.50 949.30,880.70 C1030.07,868.67 1028.32,857.89 1108.80,842.90 C1187.82,828.19 1268.30,821.30 1268.30,821.30" stroke="#626c91" />
<path d="M311.30,845.60 C311.30,845.60 391.10,841.08 470.80,842.36 C550.60,843.64 550.56,850.73 630.30,850.73 C710.06,850.59 710.17,847.82 789.80,841.82 C869.67,835.80 869.58,826.70 949.30,826.70 C1029.08,826.97 1028.85,838.16 1108.80,842.90 C1188.35,847.61 1268.30,845.60 1268.30,845.60" stroke="#a0a7e6" />
<path d="M311.30,710.60 C311.30,710.60 390.40,685.87 470.80,680.36 C549.90,674.94 550.56,688.86 630.30,688.73 C710.06,688.59 716.15,704.07 789.80,679.82 C875.65,651.55 863.48,612.47 949.30,583.70 C1022.98,572.90 1028.96,574.93 1108.80,572.90 C1188.46,572.90 1268.30,575.60 1268.30,575.60" stroke="#c4ebad" /></g>
<g fill="#fff" stroke-width="1.6"><circle cx="311.30" cy="899.60" r="4.6" stroke="#3fb1e3"/>
<circle cx="470.80" cy="896.36" r="4.6" stroke="#3fb1e3"/>
<circle cx="630.30" cy="904.73" r="4.6" stroke="#3fb1e3"/>
<circle cx="789.80" cy="895.82" r="4.6" stroke="#3fb1e3"/>
<circle cx="949.30" cy="907.70" r="4.6" stroke="#3fb1e3"/>
<circle cx="1108.80" cy="869.90" r="4.6" stroke="#3fb1e3"/>
<circle cx="1268.30" cy="875.30" r="4.6" stroke="#3fb1e3"/>
<circle cx="311.30" cy="872.60" r="4.6" stroke="#6be6c1"/>
<circle cx="470.80" cy="882.86" r="4.6" stroke="#6be6c1"/>
<circle cx="630.30" cy="880.43" r="4.6" stroke="#6be6c1"/>
<circle cx="789.80" cy="868.82" r="4.6" stroke="#6be6c1"/>
<circle cx="949.30" cy="853.70" r="4.6" stroke="#6be6c1"/>
<circle cx="1108.80" cy="842.90" r="4.6" stroke="#6be6c1"/>
<circle cx="1268.30" cy="848.30" r="4.6" stroke="#6be6c1"/>
<circle cx="311.30" cy="891.50" r="4.6" stroke="#626c91"/>
<circle cx="470.80" cy="869.36" r="4.6" stroke="#626c91"/>
<circle cx="630.30" cy="877.73" r="4.6" stroke="#626c91"/>
<circle cx="789.80" cy="890.42" r="4.6" stroke="#626c91"/>
<circle cx="949.30" cy="880.70" r="4.6" stroke="#626c91"/>
<circle cx="1108.80" cy="842.90" r="4.6" stroke="#626c91"/>
<circle cx="1268.30" cy="821.30" r="4.6" stroke="#626c91"/>
<circle cx="311.30" cy="845.60" r="4.6" stroke="#a0a7e6"/>
<circle cx="470.80" cy="842.36" r="4.6" stroke="#a0a7e6"/>
<circle cx="630.30" cy="850.73" r="4.6" stroke="#a0a7e6"/>
<circle cx="789.80" cy="841.82" r="4.6" stroke="#a0a7e6"/>
<circle cx="949.30" cy="826.70" r="4.6" stroke="#a0a7e6"/>
<circle cx="1108.80" cy="842.90" r="4.6" stroke="#a0a7e6"/>
<circle cx="1268.30" cy="845.60" r="4.6" stroke="#a0a7e6"/>
<circle cx="311.30" cy="710.60" r="4.6" stroke="#c4ebad"/>
<circle cx="470.80" cy="680.36" r="4.6" stroke="#c4ebad"/>
<circle cx="630.30" cy="688.73" r="4.6" stroke="#c4ebad"/>
<circle cx="789.80" cy="679.82" r="4.6" stroke="#c4ebad"/>
<circle cx="949.30" cy="583.70" r="4.6" stroke="#c4ebad"/>
<circle cx="1108.80" cy="572.90" r="4.6" stroke="#c4ebad"/>
<circle cx="1268.30" cy="575.60" r="4.6" stroke="#c4ebad"/></g>
<line x1="559.6" x2="584.6" y1="478" y2="478" stroke="#3fb1e3" stroke-width="1.6"/>
<circle cx="572.1" cy="478" r="5" fill="#fff" stroke="#3fb1e3" stroke-width="1.6"/>
<line x1="648.3" x2="673.3" y1="478" y2="478" stroke="#6be6c1" stroke-width="1.6"/>
<circle cx="660.8" cy="478" r="5" fill="#fff" stroke="#6be6c1" stroke-width="1.6"/>
<line x1="736.7" x2="761.7" y1="478" y2="478" stroke="#626c91" stroke-width="1.6"/>
<circle cx="749.2" cy="478" r="5" fill="#fff" stroke="#626c91" stroke-width="1.6"/>
<line x1="825.3" x2="850.3" y1="478" y2="478" stroke="#a0a7e6" stroke-width="1.6"/>
<circle cx="837.8" cy="478" r="5" fill="#fff" stroke="#a0a7e6" stroke-width="1.6"/>
<line x1="913.5" x2="938.5" y1="478" y2="478" stroke="#c4ebad" stroke-width="1.6"/>
<circle cx="926.0" cy="478" r="5" fill="#fff" stroke="#c4ebad" stroke-width="1.6"/>
</svg>
<div class="a " style="left:590.10px;top:469.00px;font-size:12px;line-height:16px;color:#999;white-space:nowrap">邮件营销</div>
<div class="a " style="left:678.80px;top:469.00px;font-size:12px;line-height:16px;color:#999;white-space:nowrap">联盟广告</div>
<div class="a " style="left:767.20px;top:469.00px;font-size:12px;line-height:16px;color:#999;white-space:nowrap">视频广告</div>
<div class="a " style="left:855.80px;top:469.00px;font-size:12px;line-height:16px;color:#999;white-space:nowrap">直接访问</div>
<div class="a " style="left:944.00px;top:469.00px;font-size:12px;line-height:16px;color:#999;white-space:nowrap">搜索引擎</div>
<div class="a " style="left:203.00px;top:923.00px;width:100px;text-align:right;font-size:12px;line-height:16px;color:#999">0</div>
<div class="a " style="left:203.00px;top:842.00px;width:100px;text-align:right;font-size:12px;line-height:16px;color:#999">300</div>
<div class="a " style="left:203.00px;top:761.00px;width:100px;text-align:right;font-size:12px;line-height:16px;color:#999">600</div>
<div class="a " style="left:203.00px;top:680.00px;width:100px;text-align:right;font-size:12px;line-height:16px;color:#999">900</div>
<div class="a " style="left:203.00px;top:599.00px;width:100px;text-align:right;font-size:12px;line-height:16px;color:#999">1,200</div>
<div class="a " style="left:203.00px;top:518.00px;width:100px;text-align:right;font-size:12px;line-height:16px;color:#999">1,500</div>
<div class="a " style="left:261.50px;top:936.00px;width:100px;text-align:center;font-size:12px;line-height:16px;color:#999">周一</div>
<div class="a " style="left:421.00px;top:936.00px;width:100px;text-align:center;font-size:12px;line-height:16px;color:#999">周二</div>
<div class="a " style="left:580.50px;top:936.00px;width:100px;text-align:center;font-size:12px;line-height:16px;color:#999">周三</div>
<div class="a " style="left:740.00px;top:936.00px;width:100px;text-align:center;font-size:12px;line-height:16px;color:#999">周四</div>
<div class="a " style="left:899.50px;top:936.00px;width:100px;text-align:center;font-size:12px;line-height:16px;color:#999">周五</div>
<div class="a " style="left:1059.00px;top:936.00px;width:100px;text-align:center;font-size:12px;line-height:16px;color:#999">周六</div>
<div class="a " style="left:1218.50px;top:936.00px;width:100px;text-align:center;font-size:12px;line-height:16px;color:#999">周日</div>
</body></html>
